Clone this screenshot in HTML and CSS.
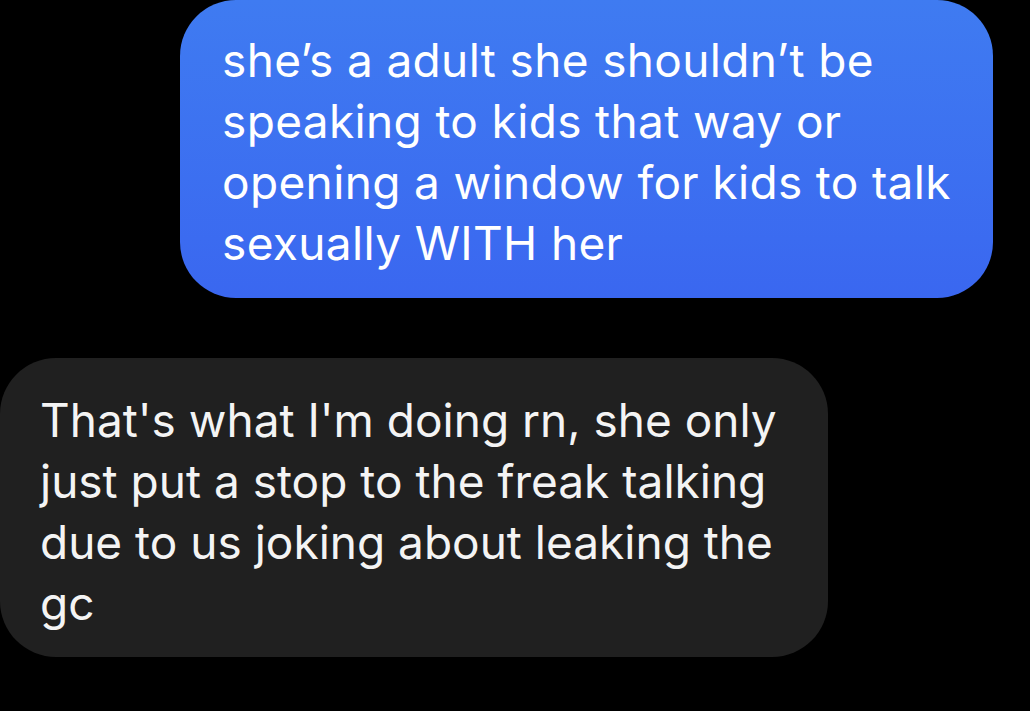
FILE: index.html
```html
<!DOCTYPE html>
<html>
<head>
<meta charset="utf-8">
<link rel="stylesheet" href="styles.css">
</head>
<body>
<div class="thread">
  <div class="row row-out">
    <div class="bubble bubble-out">she’s a adult she shouldn’t be<br>speaking to kids that way or<br>opening a window for kids to talk<br>sexually WITH her</div>
  </div>
  <div class="row row-in">
    <div class="bubble bubble-in">That's what I'm doing rn, she only<br>just put a stop to the freak talking<br>due to us joking about leaking the<br>gc</div>
  </div>
</div>
</body>
</html>
```
FILE: styles.css
```css
html, body {
  margin: 0;
  padding: 0;
  background: #000;
  width: 1030px;
  height: 711px;
  overflow: hidden;
}
.thread {
  display: flex;
  flex-direction: column;
  gap: 60px;
  font-family: Inter, "Liberation Sans", sans-serif;
  font-size: 46px;
  line-height: 61px;
  font-weight: 380;
  color: #f4f4f4;
}
.row {
  display: flex;
}
.row-out {
  padding-left: 180px;
}
.bubble {
  border-radius: 56px;
  box-sizing: border-box;
  white-space: nowrap;
}
.bubble-out {
  width: 813px;
  height: 298px;
  padding: 30px 40px 0 42px;
  letter-spacing: 0.35px;
  background: linear-gradient(180deg, #3f7bf1 0%, #3a67f0 100%);
  color: #fff;
}
.bubble-in {
  width: 828px;
  height: 299px;
  padding: 32px 40px 0 40px;
  background: #202020;
}
```
